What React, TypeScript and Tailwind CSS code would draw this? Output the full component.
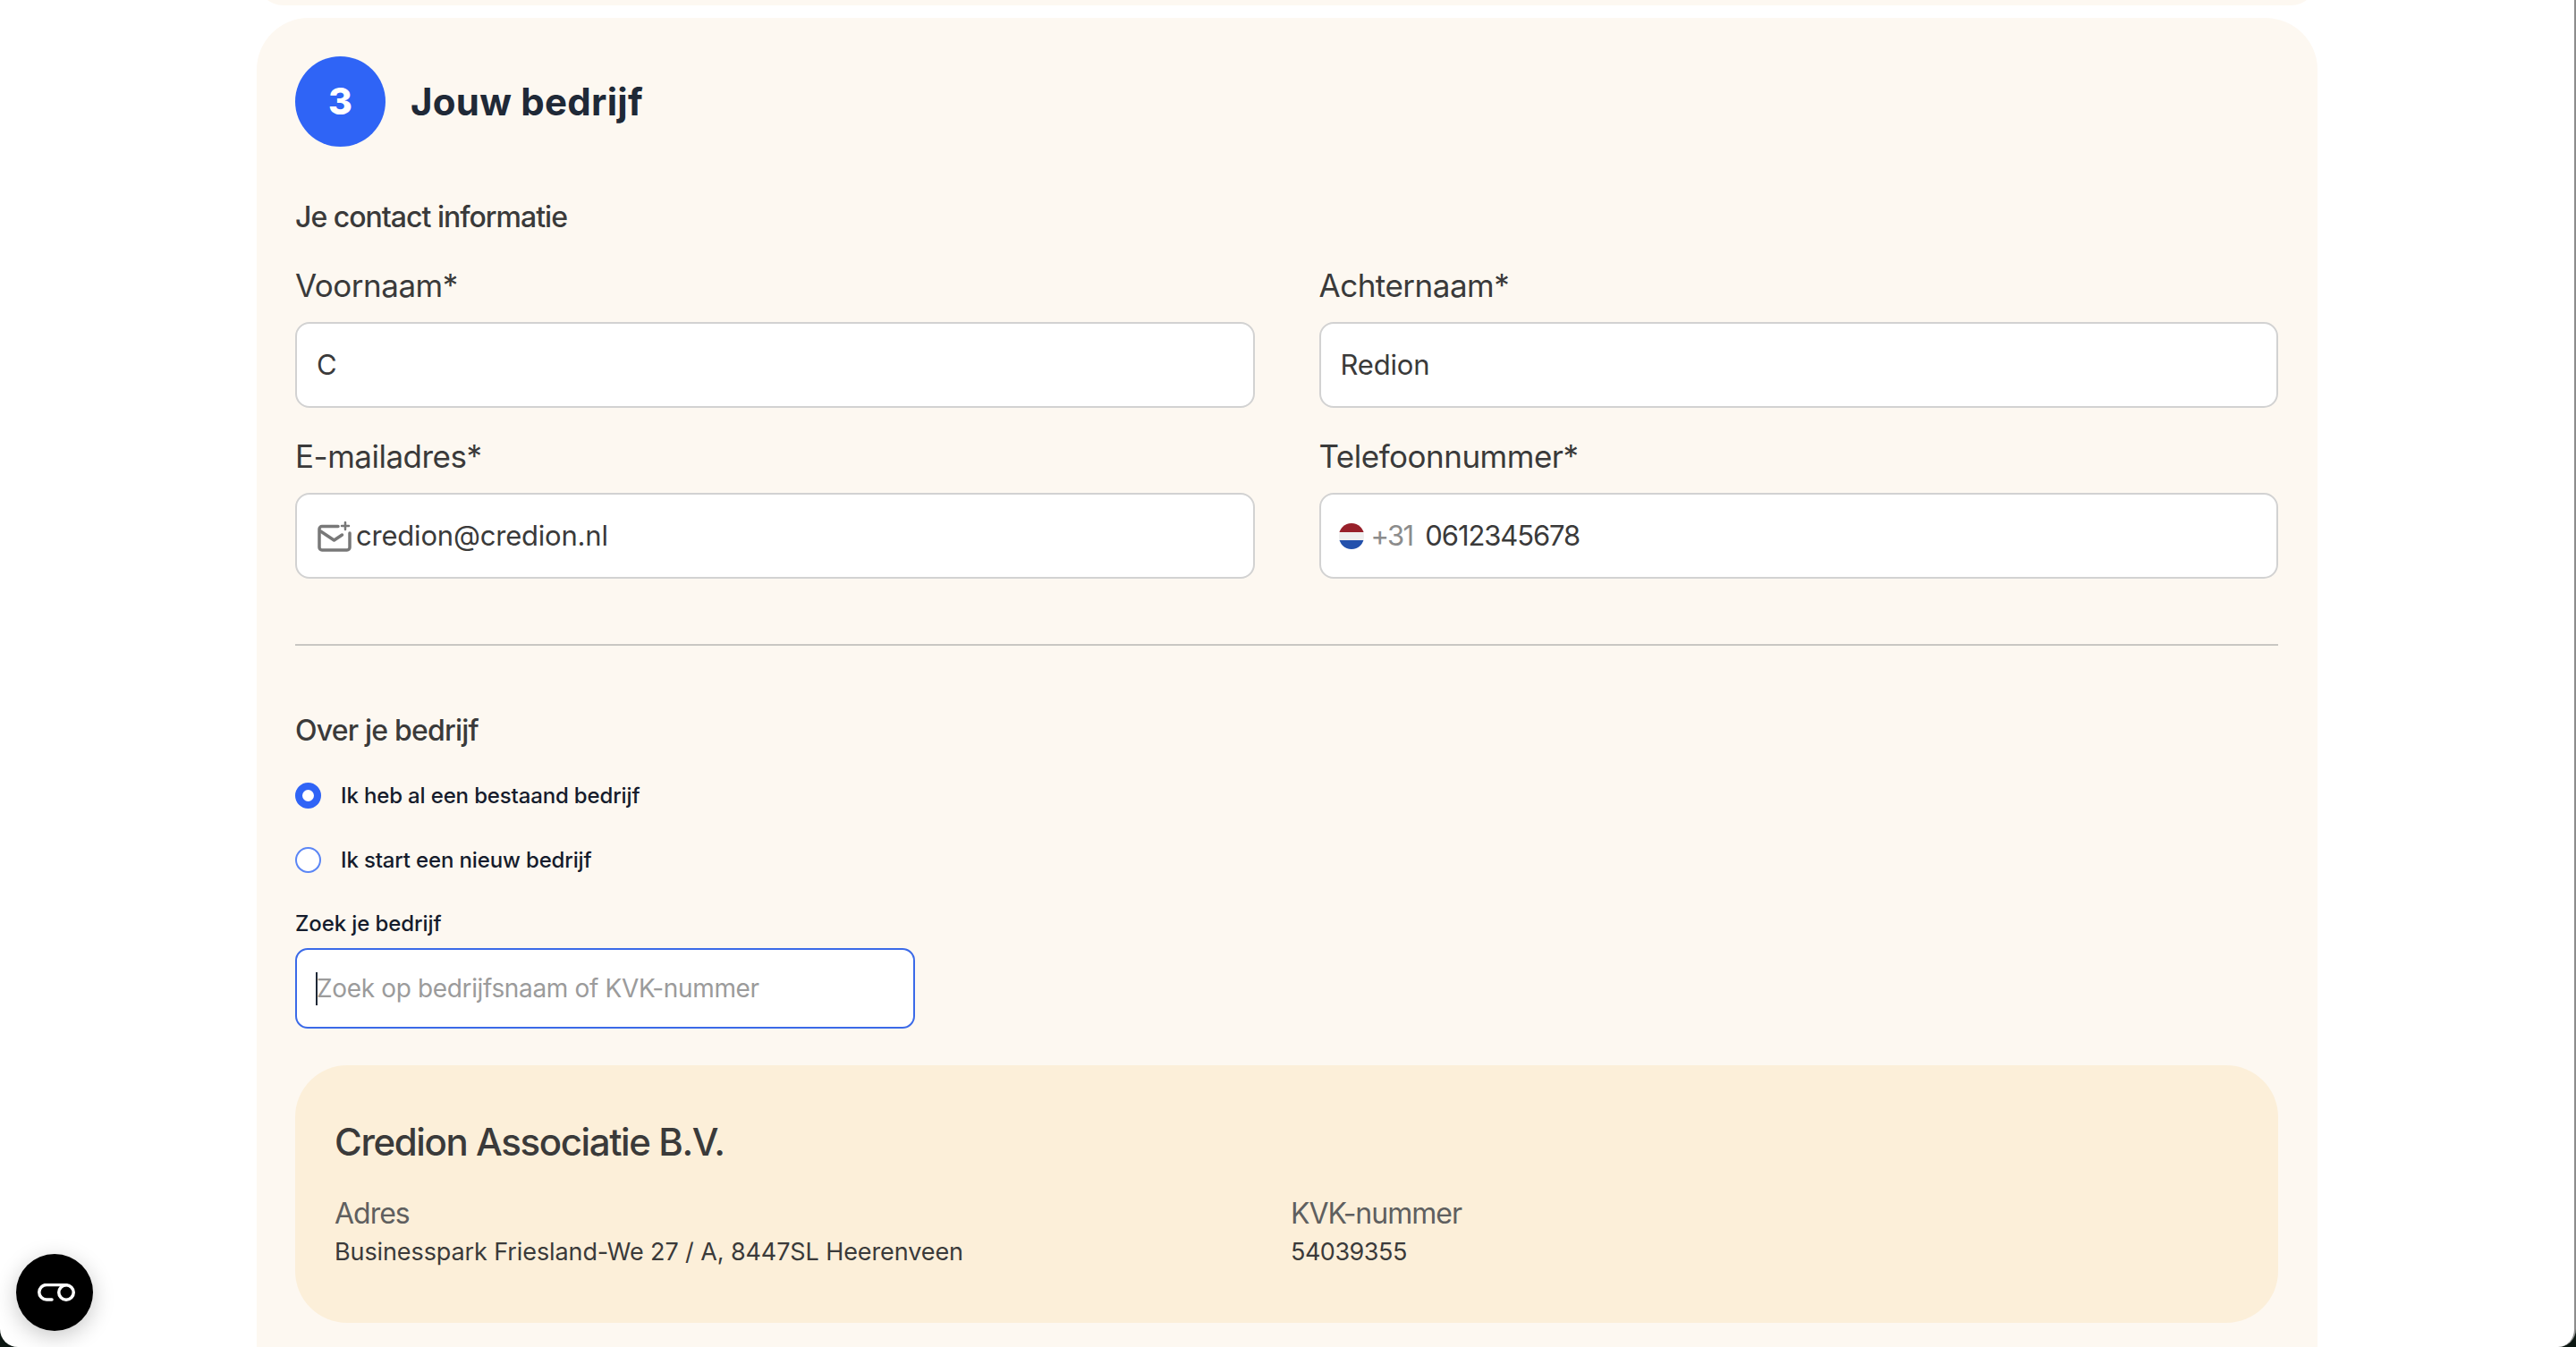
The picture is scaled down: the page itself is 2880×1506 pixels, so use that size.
const sans = "font-['Inter','Liberation_Sans',sans-serif]";

function Field({ label, children }: { label: string; children: React.ReactNode }) {
  return (
    <div className="flex flex-col">
      <label className="h-[67px] pt-[1px] text-[35px] leading-[50px] tracking-[-0.5px] text-[#3a3a3a]">{label}</label>
      <div className="flex h-[96px] items-center rounded-[16px] border-2 border-[#d2d2d2] bg-white pt-[1px] text-[31px] tracking-[-0.2px] text-[#3a3a3a]">
        {children}
      </div>
    </div>
  );
}

function MailIcon() {
  return (
    <svg width="38" height="34" viewBox="0 0 38 34" fill="none" stroke="#787878" strokeWidth="3.500" strokeLinejoin="round" strokeLinecap="round">
      <path d="M23 5.500H5a3 3 0 0 0-3 3v20.500a3 3 0 0 0 3 3h28a3 3 0 0 0 3-3V13" />
      <path d="M3.500 11l15 10 9-6" />
      <path d="M31 1v8M27 5h8" strokeWidth="2.500" />
    </svg>
  );
}

function Flag() {
  return (
    <div className="flex h-[29px] w-[28px] flex-col overflow-hidden rounded-full">
      <div className="h-[10px] bg-[#98202a]" />
      <div className="h-[9px] bg-[#efefef]" />
      <div className="h-[10px] bg-[#2351ac]" />
    </div>
  );
}

export default function App() {
  return (
    <div className={`${sans} h-screen w-full bg-[#0c1712]`}>
      <div className="h-full overflow-hidden rounded-b-[20px] border-r-2 border-[#8d8d8d] bg-white">
        <div className="mx-[287px] -mt-[54px] h-[60px] rounded-[58px] bg-[#fdf8f1]" />
        <main className="mx-[287px] mt-[14px] rounded-t-[58px] bg-[#fdf8f1] pb-[44px] pl-[43px] pr-[44px] pt-[43px]">
          <div className="flex items-center gap-[28px]">
            <div className="flex h-[101px] w-[101px] items-center justify-center rounded-full bg-[#2f64f6] text-[41px] font-extrabold text-white">3</div>
            <h2 className="text-[42px] font-bold tracking-[0.25px] text-[#1f2937]">Jouw bedrijf</h2>
          </div>

          <h3 className="mt-[54px] text-[32px] leading-[50px] font-medium tracking-[-1px] text-[#3a3a3a]">Je contact informatie</h3>

          <div className="mt-[25px] grid grid-cols-2 gap-x-[72px] gap-y-[28px]">
            <Field label="Voornaam*">
              <span className="pl-[22px]">C</span>
            </Field>
            <Field label="Achternaam*">
              <span className="pl-[22px]">Redion</span>
            </Field>
            <Field label="E-mailadres*">
              <div className="flex items-center gap-[5px] pl-[23px]">
                <MailIcon />
                <span>credion@credion.nl</span>
              </div>
            </Field>
            <Field label="Telefoonnummer*">
              <div className="flex items-center pl-[20px]">
                <Flag />
                <span className="ml-[8px] tracking-[-1.7px] text-[#8c8c8c]">+31</span>
                <span className="ml-[14px] tracking-[-1.1px]">0612345678</span>
              </div>
            </Field>
          </div>

          <hr className="mt-[73px] border-t-2 border-[#c9c7c3]" />

          <h3 className="mt-[70px] text-[32px] leading-[50px] font-medium tracking-[-0.8px] text-[#3a3a3a]">Over je bedrijf</h3>

          <div className="mt-[33px] flex h-[29px] items-center gap-[22px]">
            <div className="h-[29px] w-[29px] rounded-full border-[8px] border-[#2f64f6] bg-white" />
            <span className="text-[24px] font-medium tracking-[-0.15px] text-[#151c2c]">Ik heb al een bestaand bedrijf</span>
          </div>
          <div className="mt-[43px] flex h-[29px] items-center gap-[22px]">
            <div className="h-[29px] w-[29px] rounded-full border-2 border-[#5b86f5] bg-white" />
            <span className="text-[24px] font-medium tracking-[-0.15px] text-[#151c2c]">Ik start een nieuw bedrijf</span>
          </div>

          <label className="mt-[41px] block text-[24px] leading-[32px] font-medium tracking-[-0.1px] text-[#151c2c]">Zoek je bedrijf</label>
          <div className="relative mt-[11px] w-[693px]">
            <input
              readOnly
              placeholder="Zoek op bedrijfsnaam of KVK-nummer"
              className="h-[90px] w-full rounded-[14px] border-2 border-[#3b6ae8] bg-white pl-[22px] text-[28px] tracking-[-0.35px] outline-none placeholder:text-[#9b9b9b]"
            />
            <span className="absolute left-[23px] top-[27px] h-[37px] w-[2px] bg-[#1f2937]" />
          </div>

          <section className="mt-[41px] h-[288px] rounded-[58px] bg-[#fcefd9] px-[44px] pt-[60px]">
            <h3 className="text-[42px] leading-[52px] font-medium tracking-[-1.4px] text-[#3a3a3a]">Credion Associatie B.V.</h3>
            <div className="mt-[32px] grid grid-cols-[1069px_1fr]">
              <div>
                <div className="text-[32px] leading-[44px] tracking-[-1px] text-[#5f5f5f]">Adres</div>
                <div className="mt-[1px] text-[27px] leading-[40px] tracking-[-0.1px] text-[#3a3a3a]">Businesspark Friesland-We 27 / A, 8447SL Heerenveen</div>
              </div>
              <div>
                <div className="text-[32px] leading-[44px] tracking-[-1px] text-[#5f5f5f]">KVK-nummer</div>
                <div className="mt-[1px] text-[27px] leading-[40px] tracking-[-0.5px] text-[#3a3a3a]">54039355</div>
              </div>
            </div>
          </section>
        </main>
      </div>

      <button className="fixed bottom-[18px] left-[18px] flex h-[86px] w-[86px] items-center justify-center rounded-full bg-black pl-[3px] shadow-[0_6px_24px_rgba(0,0,0,0.22)]">
        <svg width="42" height="20" viewBox="0 0 42 20" fill="none" stroke="white" strokeWidth="3.500">
          <path d="M16 18H10a8 8 0 0 1 0-16.500h22" strokeLinecap="round" />
          <circle cx="32" cy="10" r="8.250" />
        </svg>
      </button>
    </div>
  );
}
